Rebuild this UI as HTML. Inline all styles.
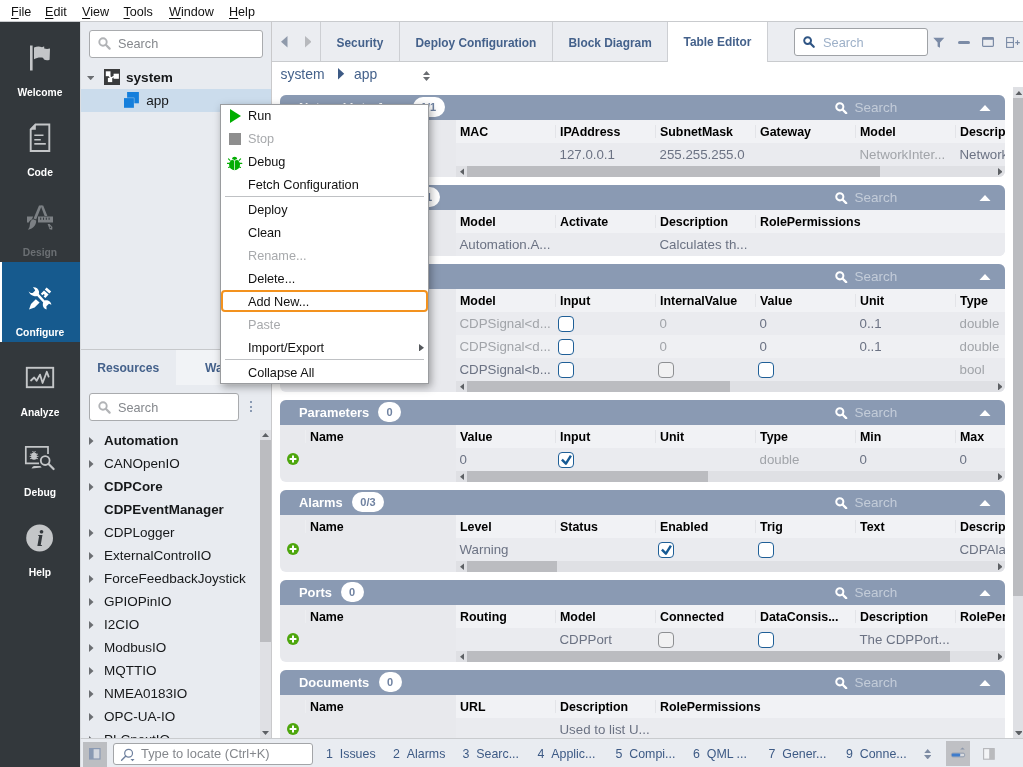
<!DOCTYPE html><html><head><meta charset="utf-8"><title>CDP Studio</title><style>
*{box-sizing:border-box;margin:0;padding:0}
html,body{width:1023px;height:767px;overflow:hidden;background:#fff}
body{position:relative;font-family:"Liberation Sans",sans-serif;font-size:13px;color:#000;-webkit-font-smoothing:antialiased}
.abs,.abs>*{position:absolute}
div,span,svg{position:absolute;white-space:nowrap}
u{text-decoration:underline;text-underline-offset:2px;text-decoration-thickness:1px}
#root{left:0;top:0;width:1023px;height:767px;will-change:transform}
#menubar{left:0;top:0;width:1023px;height:22px;background:#fff;border-bottom:1px solid #c9cbce}
#menubar span{top:4px;font-size:12.6px;line-height:16px;color:#111}
#side{left:0;top:22px;width:80px;height:745px;background:#33383c}
.sb{left:0;width:80px;height:80px}
.sb .lbl{left:0;width:80px;top:64.3px;text-align:center;font-weight:700;font-size:10.3px;line-height:14px;color:#fff}
.sb.dis .lbl{color:#6b6f73}
#leftp{left:80px;top:22px;width:191px;height:716px;background:#e8ebf0;border-left:1px solid #d9dce0}
.sbox{background:#fff;border:1px solid #a9abae;border-radius:3px}
.sbox .ph{color:#85888d;font-size:12.7px;line-height:16px}
.tree{font-size:13.5px;line-height:23px;color:#16181a}
.tree b{font-weight:700;font-size:13.4px}
.tri{width:0;height:0;border-style:solid}
#main{left:271px;top:22px;width:752px;height:716px;background:#fff;border-left:1px solid #c9c9cb}
#tabbar{left:0;top:0;width:752px;height:40px;background:#ebedf1;border-bottom:1px solid #c9cbce}
.tab{top:0;height:39px;border-left:1px solid #cdcfd3;font-weight:700;font-size:11.9px;line-height:43px;color:#44618b;text-align:left}
.tab.act{background:#fff;height:40px;border-right:1px solid #cdcfd3;line-height:41px}
.sec{left:280px;width:725px;background:#e8e9ed;border-radius:6px;overflow:hidden}
.sec .hd{left:0;top:0;width:725px;height:25px;background:#8a9ab3}
.sec .ttl{left:19px;top:0;line-height:25px;font-weight:700;font-size:12.9px;color:#fff}
.sec .bdg{top:2px;height:20px;border-radius:10px;background:#fff;color:#6f82a1;font-weight:700;font-size:11px;line-height:20px;text-align:center}
.sec .srch{left:574.5px;top:0;line-height:26px;font-size:13.5px;color:#c3ccd9}
.sec .ch{left:175.5px;top:25px;width:550px;height:23px;background:#f1f2f5}
.sec .rw{left:175.5px;width:550px;height:23px;background:#eaebef}
.sec .rw.alt{background:#eff0f3}
.sec .nm{left:30px;top:25px;line-height:25px;font-weight:700;font-size:12.4px}
.cht{top:0;line-height:25px;font-weight:700;font-size:12.4px;color:#000}
.csep{top:5px;width:1px;height:13px;background:#e3e4e8}
.ct{top:0;line-height:23px;font-size:13.3px;color:#6b7283}
.ct.lt{color:#a1a4a9}
.hs{left:175.5px;width:550px;height:11px;background:#dfe0e4}
.hs .th{left:11.5px;top:0;height:11px;background:#bbbcc0}
.cb{top:4px;width:16px;height:16px;border:1.5px solid #1f5f97;border-radius:4px;background:#fff}
.cb.g{border-color:#8d8f92;background:#f1f1f2}
#status{left:80px;top:738px;width:943px;height:29px;background:#e9ecf1;border-top:1px solid #c9cbce;border-left:1px solid #d9dce0}
#status .it{top:6px;font-size:12.4px;line-height:18px;color:#3d5a85}
#menu{left:220px;top:104px;width:209px;height:280px;background:#fff;border:1px solid #9a9c9f;box-shadow:2px 3px 8px rgba(0,0,0,.35)}
#menu .mi{left:27px;font-size:12.7px;line-height:25px;color:#111}
#menu .mi.d{color:#a7a9ac}
#menu .sp{left:4px;width:198.5px;height:1px;background:#bfc1c4}
</style></head><body><div id="root">
<div id="menubar">
<span style="left:11px"><u>F</u>ile</span>
<span style="left:45px"><u>E</u>dit</span>
<span style="left:82px"><u>V</u>iew</span>
<span style="left:123.5px"><u>T</u>ools</span>
<span style="left:169px"><u>W</u>indow</span>
<span style="left:229px"><u>H</u>elp</span>
</div>
<div id="side">
<div class="sb" style="top:0px"><svg style="left:28px;top:22px" width="26" height="30" viewBox="0 0 26 30"><rect x="2" y="1.5" width="2.6" height="25" fill="#c4c6c8"/><path d="M6 3.5 C9 2.2 11.5 2.2 14 3.2 C15 2.6 15.5 2.4 16.2 2.4 L16.2 4.6 C18 5.2 20 5.2 22 4.6 L21.6 15.8 C19.5 16.6 17.6 16.4 16 15.6 L15 13.8 C12 13 9 13.6 6 15.2 Z" fill="#c4c6c8"/></svg><div class="lbl">Welcome</div></div>
<div class="sb" style="top:80px"><svg style="left:28px;top:20px" width="26" height="32" viewBox="0 0 26 32"><path d="M7.5 2.5 H21.3 V29 H2.7 V7.5 Z" fill="none" stroke="#c4c6c8" stroke-width="1.9"/><path d="M2.7 7.8 L7.8 2.5 V7.8 Z" fill="#c4c6c8"/><rect x="6.3" y="12.5" width="9.2" height="1.5" fill="#c4c6c8"/><rect x="6.3" y="17" width="6.5" height="1.5" fill="#c4c6c8"/><rect x="6.3" y="21" width="11.5" height="1.7" fill="#c4c6c8"/></svg><div class="lbl">Code</div></div>
<div class="sb dis" style="top:160px"><svg style="left:25px;top:22px" width="30" height="28" viewBox="0 0 30 28"><g fill="#7c8084"><path d="M14 1.5 L16.8 1.5 L11.2 15.5 L8.6 14.5 Z"/><path d="M15.6 1.5 L18.2 1.5 L22.4 12 L19.6 12 Z"/><path d="M2 12.5 H8.2 L6.8 15.5 C5.5 16 4.2 17.2 3.8 18.5 H2 Z"/><rect x="13" y="12.5" width="15" height="6"/><path d="M8.3 15.3 L11.2 16.5 C11.4 20.5 8.5 24.8 2.8 25.8 C5.2 23.5 4.6 21 5.2 18.6 C5.8 16.6 7 15.6 8.3 15.3 Z"/><path d="M22.6 20 L24.6 20 L27.4 23 L27.2 25.8 L24.6 25.2 Z"/></g><g fill="#33383c"><rect x="15.2" y="13.6" width="1" height="2.2"/><rect x="18" y="13.6" width="1" height="2.2"/><rect x="20.8" y="13.6" width="1" height="2.2"/><rect x="23.6" y="13.6" width="1" height="2.2"/><circle cx="25.4" cy="23.2" r="0.8"/></g></svg><div class="lbl">Design</div></div>
<div class="sb" style="top:240px;background:#165a8e;border-left:2px solid #fff"><svg style="left:25px;top:23.8px" width="26" height="26" viewBox="0 0 26 26"><g fill="#fff"><path d="M1.6 5.2 C2.6 6.6 4.4 7.4 6 6.8 L8.2 4.6 C7.8 3.2 7.2 2.2 6 1.4 C8.6 1 11.4 2.6 12 5.6 C12.2 6.6 12 7.4 11.8 8 L17.6 14.6 C18.6 14.2 19.8 14.2 21 14.6 C23 15.4 24.2 17 24.4 18.8 L22 17.8 L19.4 20.2 L19.6 23.6 C17 22.8 15.6 20.6 15.8 18.2 C15.8 17.6 16 17 16.2 16.6 L10.2 10 C9.2 10.4 8 10.4 6.8 10 C4 9.2 2.2 7.4 1.6 5.2 Z"/><path d="M19.6 1.4 L24.2 5.6 L22.4 7.6 L17.8 3.4 Z"/><path d="M17 4.4 L21.6 8.6 L18.4 12 L16.6 10.4 L17.8 9 L16.6 8 L15.4 9.2 L13.8 7.8 Z"/><path d="M8.8 13.2 L12.6 16.6 L7.6 21.6 L2 23.6 L4 18 Z"/></g></svg><div class="lbl" style="left:-2px">Configure</div></div>
<div class="sb" style="top:320px"><svg style="left:25px;top:24px" width="30" height="24" viewBox="0 0 30 24"><rect x="1.8" y="1.8" width="26.4" height="19.4" fill="none" stroke="#c4c6c8" stroke-width="1.9"/><path d="M6 14.5 L9.2 11.5 L11.6 14.8 L15 8.6 L17.6 17 L21.8 5.8 L23.6 10.6" fill="none" stroke="#c4c6c8" stroke-width="1.8" stroke-linejoin="round" stroke-linecap="round"/></svg><div class="lbl">Analyze</div></div>
<div class="sb" style="top:400px"><svg style="left:24px;top:23px" width="32" height="26" viewBox="0 0 32 26"><path d="M24 9 V1.8 H1.8 V18.4 H15" fill="none" stroke="#c4c6c8" stroke-width="1.7"/><path d="M7.5 23.5 C8.5 21.6 9.5 21 11 21 H15.5 C16.5 21 17.2 21.6 17.6 22.6 Z" fill="#c4c6c8"/><ellipse cx="10" cy="11.2" rx="2.9" ry="3.6" fill="#c4c6c8"/><path d="M6 9.2 H14 M5.6 11.4 H14.4 M6 13.6 H14 M8.6 6 L9.6 7.6 M11.4 6 L10.4 7.6" stroke="#c4c6c8" stroke-width="0.9" fill="none"/><circle cx="21.2" cy="15.6" r="4.4" fill="none" stroke="#c4c6c8" stroke-width="1.8"/><path d="M24.6 19 L29.6 24" stroke="#c4c6c8" stroke-width="2.2" stroke-linecap="round"/></svg><div class="lbl">Debug</div></div>
<div class="sb" style="top:480px"><svg style="left:26px;top:21.6px" width="28" height="28" viewBox="0 0 28 28"><circle cx="13.6" cy="14" r="13.4" fill="#c4c6c8"/><text x="14.2" y="22" text-anchor="middle" font-family="Liberation Serif,serif" font-style="italic" font-weight="700" font-size="24" fill="#33383c">i</text></svg><div class="lbl">Help</div></div>
</div>
<div id="leftp">
<div class="sbox" style="left:8px;top:8px;width:174px;height:28px"><svg style="left:8px;top:6px" width="13" height="13" viewBox="0 0 13 13"><circle cx="5" cy="5" r="3.7" fill="none" stroke="#b1b3b6" stroke-width="1.9"/><path d="M7.8 7.8 L11.6 11.6" stroke="#b1b3b6" stroke-width="2.1999999999999997" stroke-linecap="round"/></svg><span class="ph" style="left:28px;top:5px">Search</span></div>
<svg style="left:5.6px;top:53.9px" width="7.4" height="4.2" viewBox="0 0 7.4 4.2"><polygon points="0,0 7.4,0 3.7,4.2" fill="#6b6e72"/></svg>
<svg style="left:23px;top:47px" width="16" height="16" viewBox="0 0 16 16"><rect width="16" height="16" fill="#3a3b3c"/><rect x="1.8" y="2.3" width="4.7" height="4.9" fill="#fff"/><rect x="9.6" y="4.7" width="5.3" height="5.1" fill="#fff"/><rect x="3.9" y="8.9" width="4.3" height="4.2" fill="#fff"/><path d="M5.2 6.4 L7 9.6 M6.8 9.2 L10.2 7.4" stroke="#fff" stroke-width="1.5" fill="none"/></svg>
<span style="left:45px;top:44px;line-height:23px;font-weight:700;font-size:13.6px;color:#16181a">system</span>
<div style="left:0;top:67px;width:190px;height:23px;background:#cbdcec"></div>
<svg style="left:43px;top:70px" width="15" height="16" viewBox="0 0 15 16"><rect x="3.1" y="0" width="11.8" height="11.3" fill="#157fdc"/><rect x="-0.4" y="5.7" width="10.7" height="10.5" fill="#cbdcec"/><rect x="0" y="6.1" width="9.9" height="9.7" fill="#157fdc"/></svg>
<span style="left:65.2px;top:67px;line-height:23px;font-size:13.6px;color:#16181a">app</span>
<div style="left:0;top:327px;width:190px;height:1px;background:#c6c8cb"></div>
<div style="left:95px;top:328px;width:95px;height:35px;background:#f1f3f6"></div>
<span style="left:16.3px;top:329px;line-height:35px;font-weight:700;font-size:12.1px;color:#44618b">Resources</span>
<span style="left:124px;top:329px;line-height:35px;font-weight:700;font-size:12.1px;color:#44618b">Watch</span>
<div class="sbox" style="left:8px;top:371px;width:150px;height:28px"><svg style="left:8px;top:7px" width="13" height="13" viewBox="0 0 13 13"><circle cx="5" cy="5" r="3.7" fill="none" stroke="#b1b3b6" stroke-width="1.9"/><path d="M7.8 7.8 L11.6 11.6" stroke="#b1b3b6" stroke-width="2.1999999999999997" stroke-linecap="round"/></svg><span class="ph" style="left:28px;top:5.5px">Search</span></div>
<div style="left:168.5px;top:379.0px;width:2px;height:2px;background:#8a9ab3"></div>
<div style="left:168.5px;top:383.6px;width:2px;height:2px;background:#8a9ab3"></div>
<div style="left:168.5px;top:388.2px;width:2px;height:2px;background:#8a9ab3"></div>
<div class="tree" style="left:0;top:407px;width:179px;height:309px;overflow:hidden">
<svg style="left:8.0px;top:7.5px" width="4.5" height="8.0" viewBox="0 0 4.5 8.0"><polygon points="0,0 4.5,4.0 0,8.0" fill="#6b6e72"/></svg>
<span style="left:23px;top:0px"><b>Automation</b></span>
<svg style="left:8.0px;top:30.5px" width="4.5" height="8.0" viewBox="0 0 4.5 8.0"><polygon points="0,0 4.5,4.0 0,8.0" fill="#6b6e72"/></svg>
<span style="left:23px;top:23px">CANOpenIO</span>
<svg style="left:8.0px;top:53.5px" width="4.5" height="8.0" viewBox="0 0 4.5 8.0"><polygon points="0,0 4.5,4.0 0,8.0" fill="#6b6e72"/></svg>
<span style="left:23px;top:46px"><b>CDPCore</b></span>
<span style="left:23px;top:69px"><b>CDPEventManager</b></span>
<svg style="left:8.0px;top:99.5px" width="4.5" height="8.0" viewBox="0 0 4.5 8.0"><polygon points="0,0 4.5,4.0 0,8.0" fill="#6b6e72"/></svg>
<span style="left:23px;top:92px">CDPLogger</span>
<svg style="left:8.0px;top:122.5px" width="4.5" height="8.0" viewBox="0 0 4.5 8.0"><polygon points="0,0 4.5,4.0 0,8.0" fill="#6b6e72"/></svg>
<span style="left:23px;top:115px">ExternalControlIO</span>
<svg style="left:8.0px;top:145.5px" width="4.5" height="8.0" viewBox="0 0 4.5 8.0"><polygon points="0,0 4.5,4.0 0,8.0" fill="#6b6e72"/></svg>
<span style="left:23px;top:138px">ForceFeedbackJoystick</span>
<svg style="left:8.0px;top:168.5px" width="4.5" height="8.0" viewBox="0 0 4.5 8.0"><polygon points="0,0 4.5,4.0 0,8.0" fill="#6b6e72"/></svg>
<span style="left:23px;top:161px">GPIOPinIO</span>
<svg style="left:8.0px;top:191.5px" width="4.5" height="8.0" viewBox="0 0 4.5 8.0"><polygon points="0,0 4.5,4.0 0,8.0" fill="#6b6e72"/></svg>
<span style="left:23px;top:184px">I2CIO</span>
<svg style="left:8.0px;top:214.5px" width="4.5" height="8.0" viewBox="0 0 4.5 8.0"><polygon points="0,0 4.5,4.0 0,8.0" fill="#6b6e72"/></svg>
<span style="left:23px;top:207px">ModbusIO</span>
<svg style="left:8.0px;top:237.5px" width="4.5" height="8.0" viewBox="0 0 4.5 8.0"><polygon points="0,0 4.5,4.0 0,8.0" fill="#6b6e72"/></svg>
<span style="left:23px;top:230px">MQTTIO</span>
<svg style="left:8.0px;top:260.5px" width="4.5" height="8.0" viewBox="0 0 4.5 8.0"><polygon points="0,0 4.5,4.0 0,8.0" fill="#6b6e72"/></svg>
<span style="left:23px;top:253px">NMEA0183IO</span>
<svg style="left:8.0px;top:283.5px" width="4.5" height="8.0" viewBox="0 0 4.5 8.0"><polygon points="0,0 4.5,4.0 0,8.0" fill="#6b6e72"/></svg>
<span style="left:23px;top:276px">OPC-UA-IO</span>
<svg style="left:8.0px;top:306.5px" width="4.5" height="8.0" viewBox="0 0 4.5 8.0"><polygon points="0,0 4.5,4.0 0,8.0" fill="#6b6e72"/></svg>
<span style="left:23px;top:299px">PLCnextIO</span>
</div>
<div style="left:179px;top:408px;width:11px;height:308px;background:#dfe0e4"></div>
<div style="left:179px;top:418px;width:11px;height:202px;background:#bbbcc0"></div>
<svg style="left:181.0px;top:411.0px" width="7.0" height="4.0" viewBox="0 0 7.0 4.0"><polygon points="0,4.0 7.0,4.0 3.5,0" fill="#5d6064"/></svg>
<svg style="left:181.0px;top:709.0px" width="7.0" height="4.0" viewBox="0 0 7.0 4.0"><polygon points="0,0 7.0,0 3.5,4.0" fill="#5d6064"/></svg>
</div>
<div id="main">
<div id="tabbar">
<svg style="left:9.0px;top:14.3px" width="6.5" height="11.5" viewBox="0 0 6.5 11.5"><polygon points="6.5,0 0,5.75 6.5,11.5" fill="#8f9aab"/></svg>
<svg style="left:32.7px;top:14.3px" width="6.5" height="11.5" viewBox="0 0 6.5 11.5"><polygon points="0,0 6.5,5.75 0,11.5" fill="#b7b9bd"/></svg>
<div class="tab" style="left:48px;width:79px;padding-left:15.5px">Security</div>
<div class="tab" style="left:127px;width:153px;padding-left:15.5px">Deploy Configuration</div>
<div class="tab" style="left:280px;width:115px;padding-left:15.5px">Block Diagram</div>
<div class="tab act" style="left:395px;width:101px;padding-left:15.5px">Table Editor</div>
<div class="sbox" style="left:522px;top:6px;width:134px;height:28px;border-color:#9fa2a6"><svg style="left:8.2px;top:7px" width="12" height="12" viewBox="0 0 13 13"><circle cx="5" cy="5" r="3.7" fill="none" stroke="#2f5584" stroke-width="2.1"/><path d="M7.8 7.8 L11.6 11.6" stroke="#2f5584" stroke-width="2.4" stroke-linecap="round"/></svg><span class="ph" style="left:28px;top:5.5px;color:#9db0c8;font-size:12.8px">Search</span></div>
<svg style="left:661px;top:14.5px" width="12" height="12" viewBox="0 0 12 12"><path d="M0.3 0.8 H11.3 L7 5.6 V10.8 L4.6 9.4 V5.6 Z" fill="#7b8ba6"/></svg>
<div style="left:685.8px;top:18.6px;width:12.4px;height:3px;background:#7b8ba6;border-radius:1.5px"></div>
<svg style="left:710px;top:15px" width="12" height="10" viewBox="0 0 12 10"><rect x="0.6" y="0.6" width="10.8" height="8.8" rx="0.8" fill="none" stroke="#7b8ba6" stroke-width="1.2"/><rect x="0.6" y="0.6" width="10.8" height="2.2" fill="#7b8ba6"/></svg>
<svg style="left:734px;top:15px" width="15" height="11" viewBox="0 0 15 11"><rect x="0.6" y="0.6" width="6.8" height="9.8" fill="none" stroke="#7b8ba6" stroke-width="1.1"/><path d="M0.6 5.5 H7.4" stroke="#7b8ba6" stroke-width="1.1"/><path d="M9.2 5.6 H13.8 M11.5 3.3 V7.9" stroke="#7b8ba6" stroke-width="1.1"/></svg>
</div>
<span style="left:8.5px;top:42.2px;line-height:20px;font-size:13.9px;color:#44618b">system</span>
<svg style="left:66.4px;top:46.3px" width="6.2" height="11.5" viewBox="0 0 6.2 11.5"><polygon points="0,0 6.2,5.75 0,11.5" fill="#3d5a85"/></svg>
<span style="left:82px;top:42.2px;line-height:20px;font-size:13.9px;color:#44618b">app</span>
<svg style="left:150.5px;top:49.0px" width="7.0" height="4.0" viewBox="0 0 7.0 4.0"><polygon points="0,4.0 7.0,4.0 3.5,0" fill="#6a6d71"/></svg>
<svg style="left:150.5px;top:55.0px" width="7.0" height="4.0" viewBox="0 0 7.0 4.0"><polygon points="0,0 7.0,0 3.5,4.0" fill="#6a6d71"/></svg>
<div style="left:741px;top:65px;width:11px;height:651px;background:#dfe0e4"></div>
<div style="left:741px;top:76px;width:11px;height:498px;background:#bbbcc0"></div>
<svg style="left:742.6px;top:68.6px" width="7.8" height="4.6" viewBox="0 0 7.8 4.6"><polygon points="0,4.6 7.8,4.6 3.9,0" fill="#5d6064"/></svg>
<svg style="left:742.6px;top:708.6px" width="7.8" height="4.6" viewBox="0 0 7.8 4.6"><polygon points="0,0 7.8,0 3.9,4.6" fill="#5d6064"/></svg>
</div>
<div class="sec" style="top:95px;height:82px">
<div class="hd">
<span class="ttl">NetworkInterface</span>
<div class="bdg" style="left:132.5px;width:32px">1/1</div>
<svg style="left:555px;top:6.5px" width="12.5" height="12.5" viewBox="0 0 13 13"><circle cx="5" cy="5" r="3.7" fill="none" stroke="#fff" stroke-width="2.1"/><path d="M7.8 7.8 L11.6 11.6" stroke="#fff" stroke-width="2.4" stroke-linecap="round"/></svg><span class="srch">Search</span>
<svg style="left:699.0px;top:9.5px" width="12.0" height="6.5" viewBox="0 0 12.0 6.5"><polygon points="0,6.5 12.0,6.5 6.0,0" fill="#fff"/></svg>
</div>
<div style="left:25px;top:30px;width:1px;height:13px;background:#edeef1"></div>
<span class="nm">Name</span>
<div class="ch">
<span class="cht" style="left:4.5px">MAC</span>
<div class="csep" style="left:99.5px"></div>
<span class="cht" style="left:104.5px">IPAddress</span>
<div class="csep" style="left:199.5px"></div>
<span class="cht" style="left:204.5px">SubnetMask</span>
<div class="csep" style="left:299.5px"></div>
<span class="cht" style="left:304.5px">Gateway</span>
<div class="csep" style="left:399.5px"></div>
<span class="cht" style="left:404.5px">Model</span>
<div class="csep" style="left:499.5px"></div>
<span class="cht" style="left:504.5px">Description</span>
</div>
<div class="rw" style="top:48px">
<span class="ct" style="left:104px">127.0.0.1</span>
<span class="ct" style="left:204px">255.255.255.0</span>
<span class="ct lt" style="left:404px">NetworkInter...</span>
<span class="ct" style="left:504px">NetworkInterface</span>
</div>
<div class="hs" style="top:71px"><div class="th" style="width:413px"></div>
<svg style="left:4.0px;top:1.8px" width="4.6" height="7.5" viewBox="0 0 4.6 7.5"><polygon points="4.6,0 0,3.75 4.6,7.5" fill="#5d6064"/></svg>
<svg style="left:542.0px;top:1.8px" width="4.6" height="7.5" viewBox="0 0 4.6 7.5"><polygon points="0,0 4.6,3.75 0,7.5" fill="#5d6064"/></svg>
</div>
</div>
<div class="sec" style="top:185px;height:71px">
<div class="hd">
<span class="ttl">Subcomponents</span>
<div class="bdg" style="left:138px;width:22px">1</div>
<svg style="left:555px;top:6.5px" width="12.5" height="12.5" viewBox="0 0 13 13"><circle cx="5" cy="5" r="3.7" fill="none" stroke="#fff" stroke-width="2.1"/><path d="M7.8 7.8 L11.6 11.6" stroke="#fff" stroke-width="2.4" stroke-linecap="round"/></svg><span class="srch">Search</span>
<svg style="left:699.0px;top:9.5px" width="12.0" height="6.5" viewBox="0 0 12.0 6.5"><polygon points="0,6.5 12.0,6.5 6.0,0" fill="#fff"/></svg>
</div>
<div style="left:25px;top:30px;width:1px;height:13px;background:#edeef1"></div>
<span class="nm">Name</span>
<div class="ch">
<span class="cht" style="left:4.5px">Model</span>
<div class="csep" style="left:99.5px"></div>
<span class="cht" style="left:104.5px">Activate</span>
<div class="csep" style="left:199.5px"></div>
<span class="cht" style="left:204.5px">Description</span>
<div class="csep" style="left:299.5px"></div>
<span class="cht" style="left:304.5px">RolePermissions</span>
</div>
<div class="rw" style="top:48px">
<span class="ct" style="left:4px">Automation.A...</span>
<span class="ct" style="left:204px">Calculates th...</span>
</div>
</div>
<div class="sec" style="top:264px;height:128px">
<div class="hd">
<span class="ttl">Signals</span>
<div class="bdg" style="left:75px;width:22px">3</div>
<svg style="left:555px;top:6.5px" width="12.5" height="12.5" viewBox="0 0 13 13"><circle cx="5" cy="5" r="3.7" fill="none" stroke="#fff" stroke-width="2.1"/><path d="M7.8 7.8 L11.6 11.6" stroke="#fff" stroke-width="2.4" stroke-linecap="round"/></svg><span class="srch">Search</span>
<svg style="left:699.0px;top:9.5px" width="12.0" height="6.5" viewBox="0 0 12.0 6.5"><polygon points="0,6.5 12.0,6.5 6.0,0" fill="#fff"/></svg>
</div>
<div style="left:25px;top:30px;width:1px;height:13px;background:#edeef1"></div>
<span class="nm">Name</span>
<div class="ch">
<span class="cht" style="left:4.5px">Model</span>
<div class="csep" style="left:99.5px"></div>
<span class="cht" style="left:104.5px">Input</span>
<div class="csep" style="left:199.5px"></div>
<span class="cht" style="left:204.5px">InternalValue</span>
<div class="csep" style="left:299.5px"></div>
<span class="cht" style="left:304.5px">Value</span>
<div class="csep" style="left:399.5px"></div>
<span class="cht" style="left:404.5px">Unit</span>
<div class="csep" style="left:499.5px"></div>
<span class="cht" style="left:504.5px">Type</span>
</div>
<div class="rw" style="top:48px">
<span class="ct lt" style="left:4px">CDPSignal&lt;d...</span>
<div class="cb" style="left:102.5px"></div>
<span class="ct lt" style="left:204px">0</span>
<span class="ct" style="left:304px">0</span>
<span class="ct" style="left:404px">0..1</span>
<span class="ct lt" style="left:504px">double</span>
</div>
<div class="rw alt" style="top:71px">
<span class="ct lt" style="left:4px">CDPSignal&lt;d...</span>
<div class="cb" style="left:102.5px"></div>
<span class="ct lt" style="left:204px">0</span>
<span class="ct" style="left:304px">0</span>
<span class="ct" style="left:404px">0..1</span>
<span class="ct lt" style="left:504px">double</span>
</div>
<div class="rw" style="top:94px">
<span class="ct" style="left:4px">CDPSignal&lt;b...</span>
<div class="cb" style="left:102.5px"></div>
<div class="cb g" style="left:202.5px"></div>
<div class="cb" style="left:302.5px"></div>
<span class="ct lt" style="left:504px">bool</span>
</div>
<div class="hs" style="top:117px"><div class="th" style="width:263px"></div>
<svg style="left:4.0px;top:1.8px" width="4.6" height="7.5" viewBox="0 0 4.6 7.5"><polygon points="4.6,0 0,3.75 4.6,7.5" fill="#5d6064"/></svg>
<svg style="left:542.0px;top:1.8px" width="4.6" height="7.5" viewBox="0 0 4.6 7.5"><polygon points="0,0 4.6,3.75 0,7.5" fill="#5d6064"/></svg>
</div>
</div>
<div class="sec" style="top:400px;height:82px">
<div class="hd">
<span class="ttl">Parameters</span>
<div class="bdg" style="left:98px;width:23px">0</div>
<svg style="left:555px;top:6.5px" width="12.5" height="12.5" viewBox="0 0 13 13"><circle cx="5" cy="5" r="3.7" fill="none" stroke="#fff" stroke-width="2.1"/><path d="M7.8 7.8 L11.6 11.6" stroke="#fff" stroke-width="2.4" stroke-linecap="round"/></svg><span class="srch">Search</span>
<svg style="left:699.0px;top:9.5px" width="12.0" height="6.5" viewBox="0 0 12.0 6.5"><polygon points="0,6.5 12.0,6.5 6.0,0" fill="#fff"/></svg>
</div>
<div style="left:25px;top:30px;width:1px;height:13px;background:#edeef1"></div>
<span class="nm">Name</span>
<div class="ch">
<span class="cht" style="left:4.5px">Value</span>
<div class="csep" style="left:99.5px"></div>
<span class="cht" style="left:104.5px">Input</span>
<div class="csep" style="left:199.5px"></div>
<span class="cht" style="left:204.5px">Unit</span>
<div class="csep" style="left:299.5px"></div>
<span class="cht" style="left:304.5px">Type</span>
<div class="csep" style="left:399.5px"></div>
<span class="cht" style="left:404.5px">Min</span>
<div class="csep" style="left:499.5px"></div>
<span class="cht" style="left:504.5px">Max</span>
</div>
<div class="rw" style="top:48px">
<span class="ct" style="left:4px">0</span>
<div class="cb" style="left:102.5px"><svg style="left:-1.5px;top:-1.5px" width="16" height="16" viewBox="0 0 16 16"><path d="M3.9 7.6 L7.9 11.7 L12.9 3.7" fill="none" stroke="#165a94" stroke-width="2.4" stroke-linejoin="round"/></svg></div>
<span class="ct lt" style="left:304px">double</span>
<span class="ct" style="left:404px">0</span>
<span class="ct" style="left:504px">0</span>
</div>
<svg style="left:7px;top:53px" width="12" height="12" viewBox="0 0 12 12"><circle cx="6" cy="6" r="6" fill="#4da60c"/><path d="M6 2.6 V9.4 M2.6 6 H9.4" stroke="#fff" stroke-width="2"/></svg>
<div class="hs" style="top:71px"><div class="th" style="width:241px"></div>
<svg style="left:4.0px;top:1.8px" width="4.6" height="7.5" viewBox="0 0 4.6 7.5"><polygon points="4.6,0 0,3.75 4.6,7.5" fill="#5d6064"/></svg>
<svg style="left:542.0px;top:1.8px" width="4.6" height="7.5" viewBox="0 0 4.6 7.5"><polygon points="0,0 4.6,3.75 0,7.5" fill="#5d6064"/></svg>
</div>
</div>
<div class="sec" style="top:490px;height:82px">
<div class="hd">
<span class="ttl">Alarms</span>
<div class="bdg" style="left:72px;width:32px">0/3</div>
<svg style="left:555px;top:6.5px" width="12.5" height="12.5" viewBox="0 0 13 13"><circle cx="5" cy="5" r="3.7" fill="none" stroke="#fff" stroke-width="2.1"/><path d="M7.8 7.8 L11.6 11.6" stroke="#fff" stroke-width="2.4" stroke-linecap="round"/></svg><span class="srch">Search</span>
<svg style="left:699.0px;top:9.5px" width="12.0" height="6.5" viewBox="0 0 12.0 6.5"><polygon points="0,6.5 12.0,6.5 6.0,0" fill="#fff"/></svg>
</div>
<div style="left:25px;top:30px;width:1px;height:13px;background:#edeef1"></div>
<span class="nm">Name</span>
<div class="ch">
<span class="cht" style="left:4.5px">Level</span>
<div class="csep" style="left:99.5px"></div>
<span class="cht" style="left:104.5px">Status</span>
<div class="csep" style="left:199.5px"></div>
<span class="cht" style="left:204.5px">Enabled</span>
<div class="csep" style="left:299.5px"></div>
<span class="cht" style="left:304.5px">Trig</span>
<div class="csep" style="left:399.5px"></div>
<span class="cht" style="left:404.5px">Text</span>
<div class="csep" style="left:499.5px"></div>
<span class="cht" style="left:504.5px">Description</span>
</div>
<div class="rw" style="top:48px">
<span class="ct" style="left:4px">Warning</span>
<div class="cb" style="left:202.5px"><svg style="left:-1.5px;top:-1.5px" width="16" height="16" viewBox="0 0 16 16"><path d="M3.9 7.6 L7.9 11.7 L12.9 3.7" fill="none" stroke="#165a94" stroke-width="2.4" stroke-linejoin="round"/></svg></div>
<div class="cb" style="left:302.5px"></div>
<span class="ct" style="left:504px">CDPAlarm</span>
</div>
<svg style="left:7px;top:53px" width="12" height="12" viewBox="0 0 12 12"><circle cx="6" cy="6" r="6" fill="#4da60c"/><path d="M6 2.6 V9.4 M2.6 6 H9.4" stroke="#fff" stroke-width="2"/></svg>
<div class="hs" style="top:71px"><div class="th" style="width:90px"></div>
<svg style="left:4.0px;top:1.8px" width="4.6" height="7.5" viewBox="0 0 4.6 7.5"><polygon points="4.6,0 0,3.75 4.6,7.5" fill="#5d6064"/></svg>
<svg style="left:542.0px;top:1.8px" width="4.6" height="7.5" viewBox="0 0 4.6 7.5"><polygon points="0,0 4.6,3.75 0,7.5" fill="#5d6064"/></svg>
</div>
</div>
<div class="sec" style="top:580px;height:82px">
<div class="hd">
<span class="ttl">Ports</span>
<div class="bdg" style="left:60.5px;width:23px">0</div>
<svg style="left:555px;top:6.5px" width="12.5" height="12.5" viewBox="0 0 13 13"><circle cx="5" cy="5" r="3.7" fill="none" stroke="#fff" stroke-width="2.1"/><path d="M7.8 7.8 L11.6 11.6" stroke="#fff" stroke-width="2.4" stroke-linecap="round"/></svg><span class="srch">Search</span>
<svg style="left:699.0px;top:9.5px" width="12.0" height="6.5" viewBox="0 0 12.0 6.5"><polygon points="0,6.5 12.0,6.5 6.0,0" fill="#fff"/></svg>
</div>
<div style="left:25px;top:30px;width:1px;height:13px;background:#edeef1"></div>
<span class="nm">Name</span>
<div class="ch">
<span class="cht" style="left:4.5px">Routing</span>
<div class="csep" style="left:99.5px"></div>
<span class="cht" style="left:104.5px">Model</span>
<div class="csep" style="left:199.5px"></div>
<span class="cht" style="left:204.5px">Connected</span>
<div class="csep" style="left:299.5px"></div>
<span class="cht" style="left:304.5px">DataConsis...</span>
<div class="csep" style="left:399.5px"></div>
<span class="cht" style="left:404.5px">Description</span>
<div class="csep" style="left:499.5px"></div>
<span class="cht" style="left:504.5px">RolePermissions</span>
</div>
<div class="rw" style="top:48px">
<span class="ct" style="left:104px">CDPPort</span>
<div class="cb g" style="left:202.5px"></div>
<div class="cb" style="left:302.5px"></div>
<span class="ct" style="left:404px">The CDPPort...</span>
</div>
<svg style="left:7px;top:53px" width="12" height="12" viewBox="0 0 12 12"><circle cx="6" cy="6" r="6" fill="#4da60c"/><path d="M6 2.6 V9.4 M2.6 6 H9.4" stroke="#fff" stroke-width="2"/></svg>
<div class="hs" style="top:71px"><div class="th" style="width:483px"></div>
<svg style="left:4.0px;top:1.8px" width="4.6" height="7.5" viewBox="0 0 4.6 7.5"><polygon points="4.6,0 0,3.75 4.6,7.5" fill="#5d6064"/></svg>
<svg style="left:542.0px;top:1.8px" width="4.6" height="7.5" viewBox="0 0 4.6 7.5"><polygon points="0,0 4.6,3.75 0,7.5" fill="#5d6064"/></svg>
</div>
</div>
<div class="sec" style="top:670px;height:68px;border-radius:6px 6px 0 0">
<div class="hd">
<span class="ttl">Documents</span>
<div class="bdg" style="left:98.5px;width:23px">0</div>
<svg style="left:555px;top:6.5px" width="12.5" height="12.5" viewBox="0 0 13 13"><circle cx="5" cy="5" r="3.7" fill="none" stroke="#fff" stroke-width="2.1"/><path d="M7.8 7.8 L11.6 11.6" stroke="#fff" stroke-width="2.4" stroke-linecap="round"/></svg><span class="srch">Search</span>
<svg style="left:699.0px;top:9.5px" width="12.0" height="6.5" viewBox="0 0 12.0 6.5"><polygon points="0,6.5 12.0,6.5 6.0,0" fill="#fff"/></svg>
</div>
<div style="left:25px;top:30px;width:1px;height:13px;background:#edeef1"></div>
<span class="nm">Name</span>
<div class="ch">
<span class="cht" style="left:4.5px">URL</span>
<div class="csep" style="left:99.5px"></div>
<span class="cht" style="left:104.5px">Description</span>
<div class="csep" style="left:199.5px"></div>
<span class="cht" style="left:204.5px">RolePermissions</span>
</div>
<div class="rw" style="top:48px">
<span class="ct" style="left:104px">Used to list U...</span>
</div>
<svg style="left:7px;top:53px" width="12" height="12" viewBox="0 0 12 12"><circle cx="6" cy="6" r="6" fill="#4da60c"/><path d="M6 2.6 V9.4 M2.6 6 H9.4" stroke="#fff" stroke-width="2"/></svg>
</div>
<div id="status">
<div style="left:2px;top:3px;width:24px;height:26px;background:#bcbec2"></div>
<svg style="left:8px;top:8.8px" width="12" height="12" viewBox="0 0 12 12"><rect x="0.6" y="0.6" width="10.4" height="10.4" fill="#d4d8df" stroke="#8a9ab3" stroke-width="1.2"/><rect x="0.6" y="0.6" width="4" height="10.4" fill="#8a9ab3"/></svg>
<div class="sbox" style="left:32px;top:4px;width:200px;height:22px;border-color:#a3a5a8"><svg style="left:6px;top:4px" width="16" height="14" viewBox="0 0 16 14"><circle cx="8.6" cy="5.2" r="3.9" fill="none" stroke="#6d7f9d" stroke-width="1.2"/><path d="M5.8 8 L1.6 12.2" stroke="#6d7f9d" stroke-width="1.4" stroke-linecap="round"/><path d="M10.5 11 H14.5 L12.5 13.2 Z" fill="#6d7f9d"/></svg><span class="ph" style="left:27px;top:1.5px;font-size:12.9px;color:#84878c">Type to locate (Ctrl+K)</span></div>
<span class="it" style="left:245px">1&nbsp;&nbsp;Issues</span>
<span class="it" style="left:312px">2&nbsp;&nbsp;Alarms</span>
<span class="it" style="left:381.5px">3&nbsp;&nbsp;Searc...</span>
<span class="it" style="left:456.5px">4&nbsp;&nbsp;Applic...</span>
<span class="it" style="left:534.5px">5&nbsp;&nbsp;Compi...</span>
<span class="it" style="left:612px">6&nbsp;&nbsp;QML ...</span>
<span class="it" style="left:687.5px">7&nbsp;&nbsp;Gener...</span>
<span class="it" style="left:765px">9&nbsp;&nbsp;Conne...</span>
<svg style="left:842.6px;top:9.8px" width="7.4" height="4.4" viewBox="0 0 7.4 4.4"><polygon points="0,4.4 7.4,4.4 3.7,0" fill="#7d8ba3"/></svg>
<svg style="left:842.6px;top:15.8px" width="7.4" height="4.4" viewBox="0 0 7.4 4.4"><polygon points="0,0 7.4,0 3.7,4.4" fill="#7d8ba3"/></svg>
<div style="left:865px;top:2px;width:24px;height:25px;background:#bfc0c4"></div>
<svg style="left:869px;top:7px" width="16" height="14" viewBox="0 0 16 14"><rect x="1.4" y="7.2" width="13.2" height="3.6" rx="1.4" fill="#d9dbdf" stroke="#7d8ba3" stroke-width="0.8"/><rect x="1.8" y="7.6" width="8.4" height="2.8" rx="1" fill="#3f7ccb"/><polygon points="10.2,3.6 14.8,3.6 12.5,1.4" fill="#8a96ab"/></svg>
<svg style="left:902px;top:8.6px" width="12" height="12" viewBox="0 0 12 12"><rect x="0.6" y="0.6" width="10.6" height="10.6" fill="#f3f4f6" stroke="#b4b5b9" stroke-width="1.1"/><rect x="6.2" y="0.6" width="5" height="10.6" fill="#b9babd"/></svg>
</div>
<div id="menu">
<span class="mi" style="top:-1px">Run</span>
<span class="mi d" style="top:22px">Stop</span>
<span class="mi" style="top:45px">Debug</span>
<span class="mi" style="top:68px">Fetch Configuration</span>
<div class="sp" style="top:91px"></div>
<span class="mi" style="top:93px">Deploy</span>
<span class="mi" style="top:116px">Clean</span>
<span class="mi d" style="top:139px">Rename...</span>
<span class="mi" style="top:162px">Delete...</span>
<div style="left:0;top:185px;width:207px;height:22px;border:2px solid #f3921e;border-radius:4px"></div>
<span class="mi" style="top:185px">Add New...</span>
<span class="mi d" style="top:208px">Paste</span>
<span class="mi" style="top:231px">Import/Export</span>
<div class="sp" style="top:254px"></div>
<span class="mi" style="top:256px">Collapse All</span>
<svg style="left:8.8px;top:3.9000000000000004px" width="11.0" height="14.0" viewBox="0 0 11.0 14.0"><polygon points="0,0 11.0,7.0 0,14.0" fill="#00ae00"/></svg>
<div style="left:8px;top:27.5px;width:12px;height:12px;background:#8e8e8e"></div>
<svg style="left:6px;top:50px" width="16" height="16" viewBox="0 0 16 16"><g fill="#04ad04"><path d="M5 4.3 C5 1 10.2 1 10.2 4.3 Z"/><ellipse cx="7.55" cy="9.6" rx="5.5" ry="5.6"/></g><path d="M1.5 3.9 L3 5.4 M0.3 8.4 H2.4 M1.6 12.5 L3.2 11.7 M13.6 3.9 L12.1 5.4 M14.8 8.4 H12.7 M13.5 12.5 L11.9 11.7" stroke="#04ad04" stroke-width="1.1" stroke-linecap="round" fill="none"/><path d="M7.55 5.4 V15.4" stroke="#fff" stroke-width="0.9" opacity=".8"/><path d="M5 4.3 L7.55 5.6 L10.2 4.3" stroke="#fff" stroke-width="0.8" fill="none" opacity=".8"/></svg>
<svg style="left:198.0px;top:238.6px" width="5.0" height="7.5" viewBox="0 0 5.0 7.5"><polygon points="0,0 5.0,3.75 0,7.5" fill="#55585c"/></svg>
</div>
</div></body></html>
